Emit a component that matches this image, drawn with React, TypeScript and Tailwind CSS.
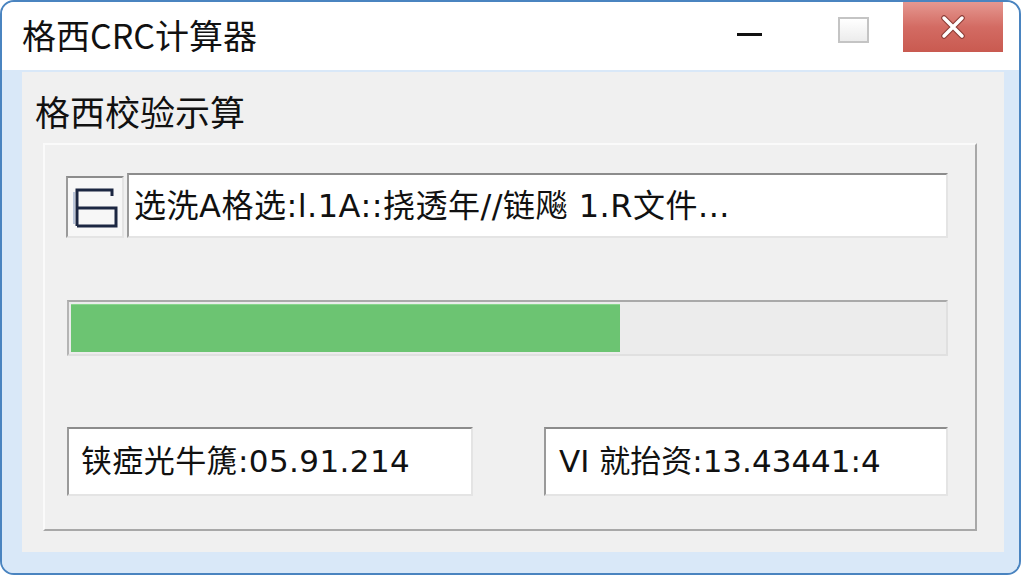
import React from 'react';

const cjk = "font-['Noto_Sans_CJK_SC',sans-serif]";
const mixed = "font-['DejaVu_Sans','Noto_Sans_CJK_SC',sans-serif]";

function FolderIcon() {
  return (
    <svg width="48" height="46" viewBox="0 0 48 46" fill="none">
      <path d="M6 42 V6 H41 V12" stroke="#1c2742" strokeWidth="3" />
      <path d="M6 24 H45 V42 H6" stroke="#1c2742" strokeWidth="3" />
      <path d="M3 8 V40" stroke="#7d92bb" strokeWidth="1" />
    </svg>
  );
}

function SunkenBox({ className, children }: { className?: string; children?: React.ReactNode }) {
  return (
    <div
      className={
        'border-2 border-t-[#8c8c8c] border-l-[#9a9a9a] border-r-[#e4e4e4] border-b-[#e4e4e4] ' +
        (className || '')
      }
    >
      {children}
    </div>
  );
}

function TitleBar() {
  return (
    <div className="h-[68px] flex bg-white">
      <span className={`${cjk} pl-[20px] pt-[10px] text-[34px] leading-[46px] text-[#111]`}>
        格西CRC计算器
      </span>
      <div className="ml-auto flex pr-[16px]">
        <div className="w-[25px] mt-[31px] h-[3px] bg-[#111]" />
        <div className="ml-[76px] mt-[15px] w-[31px] h-[26px] border-2 border-[#c4c4c4] bg-gradient-to-b from-white to-[#ececec]" />
        <div className="ml-[34px] w-[100px] h-[50px] bg-gradient-to-b from-[#e59891] via-[#d36b63] to-[#c95a50] flex items-center justify-center">
          <svg width="30" height="30" viewBox="0 0 30 30">
            <path d="M6 6 L24 24 M24 6 L6 24" stroke="#8a3a34" strokeWidth="5.5" strokeLinecap="round" />
            <path d="M6 6 L24 24 M24 6 L6 24" stroke="#fff" strokeWidth="3.5" strokeLinecap="round" />
          </svg>
        </div>
      </div>
    </div>
  );
}

export default function App() {
  return (
    <div className="w-[1024px] h-[576px] bg-white">
      <div className="w-[1021px] h-[575px] rounded-[14px] border-2 border-[#4a84c0] overflow-hidden flex flex-col bg-[#d9e8f8]">
        <TitleBar />
        <div className="flex-1 flex pt-[2px] pl-[20px] pr-[15px] pb-[21px] bg-[#d9e8f8]">
          <div className="flex-1 flex flex-col bg-[#f0f0f0] pl-[21px] pr-[27px]">
            <div className={`${cjk} mt-[18px] ml-[-8px] h-[41px] text-[35px] leading-[41px] text-[#111]`}>
              格西校验示算
            </div>
            <div className="mt-[12px] h-[388px] border-2 border-t-[#fafafa] border-l-[#fafafa] border-r-[#a8a8a8] border-b-[#a8a8a8] flex flex-col pl-[21px] pr-[27px] pt-[28px]">
              <div className="h-[65px] flex items-end gap-[3px]">
                <SunkenBox className="w-[58px] h-[62px] bg-[#f7f7f7] flex items-center justify-center">
                  <FolderIcon />
                </SunkenBox>
                <SunkenBox className="flex-1 h-[65px] bg-white flex items-center pl-[5px]">
                  <span className={`${mixed} text-[32px] leading-none tracking-[0.5px] text-[#111] whitespace-nowrap`}>
                    选洗A格选:l.1A::挠透年//链飚 1.R文件...
                  </span>
                </SunkenBox>
              </div>
              <div className="mt-[62px] ml-[1px] h-[56px] border-2 border-t-[#a9a9a9] border-l-[#b4b4b4] border-r-[#e0e0e0] border-b-[#e0e0e0] bg-[#ececec] p-[2px]">
                <div className="w-[549px] h-full bg-[#6cc472] border-t border-[#8ad68e]" />
              </div>
              <div className="mt-[71px] ml-[1px] flex justify-between">
                <SunkenBox className="w-[406px] h-[69px] bg-white flex items-center pl-[12px]">
                  <span className={`${mixed} text-[31px] leading-none tracking-[0.4px] text-[#111] whitespace-nowrap`}>
                    铗瘂光牛篪:05.91.214
                  </span>
                </SunkenBox>
                <SunkenBox className="w-[404px] h-[69px] bg-white flex items-center pl-[13px]">
                  <span className={`${mixed} text-[31px] leading-none text-[#111] whitespace-nowrap`}>
                    VI 就抬资:13.43441:4
                  </span>
                </SunkenBox>
              </div>
            </div>
          </div>
        </div>
      </div>
    </div>
  );
}
